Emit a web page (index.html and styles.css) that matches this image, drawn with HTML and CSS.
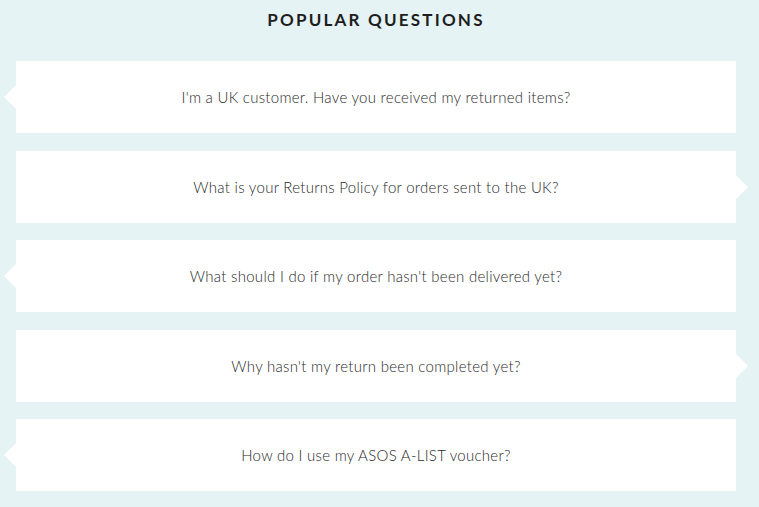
FILE: index.html
```html
<!DOCTYPE html>
<html lang="en">
<head>
    <meta charset="UTF-8">
    <title>Popular Questions</title>
    <link rel="stylesheet" href="styles.css">
</head>
<body>
    <div class="faq">
        <h2>Popular Questions</h2>
        <ul class="questions">
            <li class="question left">I'm a UK customer. Have you received my returned items?</li>
            <li class="question right">What is your Returns Policy for orders sent to the UK?</li>
            <li class="question left">What should I do if my order hasn't been delivered yet?</li>
            <li class="question right">Why hasn't my return been completed yet?</li>
            <li class="question left">How do I use my ASOS A-LIST voucher?</li>
        </ul>
    </div>
</body>
</html>
```

FILE: styles.css
```css
body {
    margin: 0;
    background-color: #e5f3f4;
    font-family: 'Lato', 'Liberation Sans', sans-serif;
    color: #2d2d2d;
}
.faq {
    margin: 0 23px 0 16px;
}
h2 {
    margin: 0;
    padding-top: 9px;
    height: 61px;
    box-sizing: border-box;
    text-align: center;
    text-transform: uppercase;
    font-size: 17px;
    font-weight: 700;
    letter-spacing: 2.2px;
    line-height: 22px;
    color: #1e1e1e;
}
.questions {
    list-style: none;
    margin: 0;
    padding: 0;
    display: flex;
    flex-direction: column;
    gap: 17.5px;
}
.question {
    position: relative;
    height: 72px;
    display: flex;
    align-items: center;
    justify-content: center;
    background: white;
    font-size: 15px;
    font-weight: 300;
    color: #2a2a2a;
    letter-spacing: 0.28px;
}
.question::before {
    content: "";
    position: absolute;
    top: 50%;
    margin-top: -12px;
    border-top: 12px solid transparent;
    border-bottom: 12px solid transparent;
}
.question.left::before {
    left: -12px;
    border-right: 12px solid white;
}
.question.right::before {
    right: -12px;
    border-left: 12px solid white;
}
```
